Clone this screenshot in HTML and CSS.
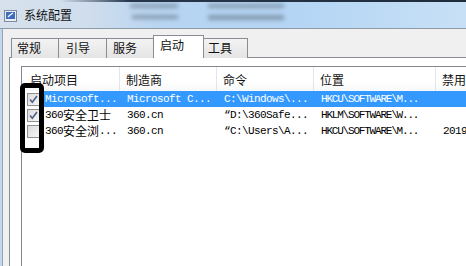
FILE: index.html
```html
<!DOCTYPE html>
<html>
<head>
<meta charset="utf-8">
<link rel="stylesheet" href="styles.css">
</head>
<body>
<div class="window">
  <div class="titlebar">
    <span class="blur b1"></span><span class="blur b2"></span><span class="blur b3"></span><span class="blur b4"></span>
    <span class="topline"></span>
    <svg class="appicon" width="13" height="12" viewBox="0 0 13 12">
      <rect x="0.5" y="0.5" width="12" height="11" fill="#e9eef4" stroke="#7d8aa0"/>
      <rect x="2" y="2" width="9" height="7" fill="#3d6cc0"/>
      <polyline points="4,7 6,5 9,3" fill="none" stroke="#ffffff" stroke-width="1.2"/>
    </svg>
    <span class="title">系统配置</span>
  </div>
  <div class="client">
    <div class="inner">
      <div class="tabs">
        <div class="tab t1">常规</div>
        <div class="tab t2">引导</div>
        <div class="tab t3">服务</div>
        <div class="tab sel">启动</div>
        <div class="tab t5">工具</div>
      </div>
      <div class="panel">
        <div class="listview">
          <div class="header">
            <div class="hcell h1">启动项目</div>
            <div class="hcell">制造商</div>
            <div class="hcell">命令</div>
            <div class="hcell">位置</div>
            <div class="hcell last">禁用</div>
          </div>
          <div class="row">
            <span class="check on"><svg width="11" height="11" viewBox="0 0 11 11"><polyline points="2,5.5 4.3,8.3 9,2" fill="none" stroke="#4d6185" stroke-width="1.6"/></svg></span>
            <div class="cells selected">
              <div class="cell c1">Microsoft...</div>
              <div class="cell">Microsoft C...</div>
              <div class="cell">C:\Windows\...</div>
              <div class="cell reg">HKCU\SOFTWARE\M...</div>
              <div class="cell"></div>
            </div>
          </div>
          <div class="row">
            <span class="check on"><svg width="11" height="11" viewBox="0 0 11 11"><polyline points="2,5.5 4.3,8.3 9,2" fill="none" stroke="#4d6185" stroke-width="1.6"/></svg></span>
            <div class="cells">
              <div class="cell c1">360<span class="zh">安全卫士</span></div>
              <div class="cell">360.cn</div>
              <div class="cell">“D:\360Safe...</div>
              <div class="cell reg">HKLM\SOFTWARE\W...</div>
              <div class="cell"></div>
            </div>
          </div>
          <div class="row">
            <span class="check"></span>
            <div class="cells">
              <div class="cell c1">360<span class="zh">安全浏</span>...</div>
              <div class="cell">360.cn</div>
              <div class="cell">“C:\Users\A...</div>
              <div class="cell reg">HKCU\SOFTWARE\M...</div>
              <div class="cell">2019</div>
            </div>
          </div>
        </div>
      </div>
    </div>
  </div>
  <div class="annot"></div>
</div>
</body>
</html>
```
FILE: styles.css
```css
* { box-sizing: border-box; }
html, body { margin: 0; padding: 0; background: #f0f0f0; }
.window {
  position: relative;
  width: 466px;
  height: 266px;
  overflow: hidden;
  background: #f0f0f0;
  display: flex;
  flex-direction: column;
}
.titlebar {
  position: relative;
  height: 29px;
  flex: none;
  display: flex;
  align-items: center;
  padding-left: 4px;
  padding-top: 1px;
  gap: 7px;
  border-bottom: 1px solid #8f9aa6;
  background: linear-gradient(90deg, #d6e1ec 0px, #cfdded 90px, #b7d5f2 160px, #b4d5f4 300px, #c0dcf5 400px, #c7e0f6 466px);
  overflow: hidden;
}
.topline {
  position: absolute;
  left: 0; top: 0; right: 0;
  height: 2px;
  background: linear-gradient(90deg, rgba(40,52,70,0) 60px, #27364a 130px, #1f2c3c 466px);
}
.blur {
  position: absolute;
  background: #6f8193;
  filter: blur(2px);
  opacity: 0.7;
}
.b1 { left: 130px; top: 4px; width: 48px; height: 4px; }
.b2 { left: 208px; top: 4px; width: 76px; height: 4px; }
.b3 { left: 132px; top: 15px; width: 46px; height: 4px; }
.b4 { left: 208px; top: 15px; width: 76px; height: 5px; }
.appicon { position: relative; flex: none; margin-top: 2px; }
.title {
  position: relative;
  font: 12px "Noto Sans CJK SC", sans-serif;
  color: #111;
}
.client {
  flex: 1;
  border-left: 2px solid #c3d8ee;
  display: flex;
}
.inner {
  flex: 1;
  border-left: 1px solid #9aa4b0;
  padding: 6px 0 0 6px;
  display: flex;
  flex-direction: column;
}
.tabs {
  display: flex;
  align-items: flex-end;
  height: 23px;
  padding-left: 2px;
  position: relative;
  z-index: 1;
  margin-bottom: -1px;
}
.tab {
  height: 20px;
  border: 1px solid #898c95;
  border-bottom: none;
  border-right: none;
  background: linear-gradient(#f3f3f3, #e4e4e4);
  font: 12px "Noto Sans CJK SC", sans-serif;
  color: #111;
  padding-left: 6px;
  line-height: 18px;
}
.t1 { width: 47px; padding-left: 5px; }
.t2 { width: 48px; padding-left: 7px; }
.t3 { width: 47px; }
.tab.sel {
  width: 51px;
  height: 23px;
  background: #ffffff;
  border-right: 1px solid #898c95;
  line-height: 18px;
}
.t5 { width: 44px; border-left: none; border-right: 1px solid #898c95; padding-left: 4px; }
.panel {
  flex: 1;
  border: 1px solid #898c95;
  border-right: none;
  border-bottom: none;
  background: #ffffff;
  padding: 8px 0 0 11px;
  display: flex;
}
.listview {
  flex: 1;
  border: 1px solid #828790;
  border-right: none;
  border-bottom: none;
  background: #fff;
}
.header {
  display: grid;
  grid-template-columns: 98px 97px 97px 122px 1fr;
  height: 24px;
}
.hcell {
  border-right: 1px solid #e3e5e8;
  font: 12px "Noto Sans CJK SC", sans-serif;
  color: #111;
  padding: 4px 0 0 6px;
  white-space: nowrap;
  background: linear-gradient(#ffffff, #ffffff 60%, #f7f8f9);
}
.hcell.h1 { padding-left: 8px; }
.hcell.last { border-right: none; }
.row {
  display: flex;
  align-items: center;
  height: 16px;
}
.check {
  flex: none;
  width: 13px;
  height: 13px;
  margin: 0 4px 0 5px;
  border: 1px solid #8e8f8f;
  background: linear-gradient(135deg, #dcdcdc, #f6f6f6);
  display: flex;
  align-items: center;
  justify-content: center;
}
.cells {
  flex: 1;
  height: 16px;
  display: grid;
  grid-template-columns: 77px 97px 97px 122px 1fr;
  align-items: center;
  font: 11px "Liberation Mono", monospace;
  letter-spacing: -0.6px;
  color: #000;
}
.cells.selected { background: #3399ff; color: #fff; }
.cell { padding-left: 6px; white-space: nowrap; overflow: hidden; height: 16px; line-height: 16px; }
.cell.c1 { padding-left: 1px; }
.cell.reg { font-size: 11px; letter-spacing: -1.2px; }
.zh { font: 12px/16px "Noto Sans CJK SC", sans-serif; letter-spacing: 0; display: inline-block; vertical-align: top; }
.annot {
  position: absolute;
  left: 20px;
  top: 83px;
  width: 24px;
  height: 70px;
  border: 5px solid #000;
  border-radius: 5px;
}
```
